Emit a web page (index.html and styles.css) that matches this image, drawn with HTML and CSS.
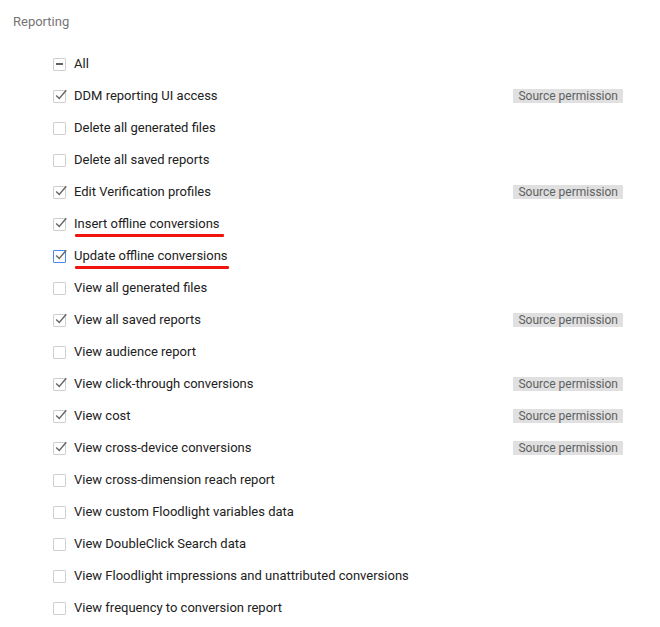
FILE: index.html
```html
<!DOCTYPE html>
<html>
<head>
<meta charset="utf-8">
<link rel="stylesheet" href="styles.css">
</head>
<body>
<div class="section">
  <div class="heading">Reporting</div>
  <ul class="perms">
    <li class="row"><span class="cb indeterminate"></span><span class="label">All</span></li>
    <li class="row"><span class="cb checked"><svg viewBox="0 0 16 16"><path d="M2.5 8.5 L6 12 L14 2.5"/></svg></span><span class="label">DDM reporting UI access</span><span class="badge">Source permission</span></li>
    <li class="row"><span class="cb"></span><span class="label">Delete all generated files</span></li>
    <li class="row"><span class="cb"></span><span class="label">Delete all saved reports</span></li>
    <li class="row"><span class="cb checked"><svg viewBox="0 0 16 16"><path d="M2.5 8.5 L6 12 L14 2.5"/></svg></span><span class="label">Edit Verification profiles</span><span class="badge">Source permission</span></li>
    <li class="row"><span class="cb checked"><svg viewBox="0 0 16 16"><path d="M2.5 8.5 L6 12 L14 2.5"/></svg></span><span class="label marked">Insert offline conversions</span></li>
    <li class="row"><span class="cb checked focus"><svg viewBox="0 0 16 16"><path d="M2.5 8.5 L6 12 L14 2.5"/></svg></span><span class="label marked short">Update offline conversions</span></li>
    <li class="row"><span class="cb"></span><span class="label">View all generated files</span></li>
    <li class="row"><span class="cb checked"><svg viewBox="0 0 16 16"><path d="M2.5 8.5 L6 12 L14 2.5"/></svg></span><span class="label">View all saved reports</span><span class="badge">Source permission</span></li>
    <li class="row"><span class="cb"></span><span class="label">View audience report</span></li>
    <li class="row"><span class="cb checked"><svg viewBox="0 0 16 16"><path d="M2.5 8.5 L6 12 L14 2.5"/></svg></span><span class="label">View click-through conversions</span><span class="badge">Source permission</span></li>
    <li class="row"><span class="cb checked"><svg viewBox="0 0 16 16"><path d="M2.5 8.5 L6 12 L14 2.5"/></svg></span><span class="label">View cost</span><span class="badge">Source permission</span></li>
    <li class="row"><span class="cb checked"><svg viewBox="0 0 16 16"><path d="M2.5 8.5 L6 12 L14 2.5"/></svg></span><span class="label">View cross-device conversions</span><span class="badge">Source permission</span></li>
    <li class="row"><span class="cb"></span><span class="label">View cross-dimension reach report</span></li>
    <li class="row"><span class="cb"></span><span class="label">View custom Floodlight variables data</span></li>
    <li class="row"><span class="cb"></span><span class="label">View DoubleClick Search data</span></li>
    <li class="row"><span class="cb"></span><span class="label">View Floodlight impressions and unattributed conversions</span></li>
    <li class="row"><span class="cb"></span><span class="label">View frequency to conversion report</span></li>
  </ul>
</div>
</body>
</html>
```
FILE: styles.css
```css
html, body {
  margin: 0;
  padding: 0;
  background: #fff;
}
body {
  font-family: Roboto, "Liberation Sans", Arial, sans-serif;
  color: #212121;
  width: 660px;
  height: 627px;
  overflow: hidden;
}
.section {
  padding: 12px 37px 0 13px;
}
.heading {
  font-size: 13px;
  line-height: 20px;
  color: #757575;
}
.perms {
  list-style: none;
  margin: 16px 0 0 40px;
  padding: 0;
}
.row {
  display: flex;
  align-items: center;
  height: 32px;
}
.cb {
  position: relative;
  box-sizing: border-box;
  width: 13px;
  height: 13px;
  border: 1px solid #cfcfcf;
  border-radius: 1px;
  flex: 0 0 auto;
  margin-right: 8px;
}
.cb.focus {
  border-color: #4a8af4;
}
.cb.indeterminate::after {
  content: "";
  position: absolute;
  left: 2px;
  right: 2px;
  top: 4px;
  height: 2px;
  background: #616161;
}
.cb svg {
  position: absolute;
  left: 0px;
  top: -3px;
  width: 14px;
  height: 14px;
  overflow: visible;
}
.cb svg path {
  fill: none;
  stroke: #666;
  stroke-width: 1.6;
}
.label {
  font-size: 13px;
  line-height: 16px;
  position: relative;
}
.label.marked::after {
  content: "";
  position: absolute;
  left: 1px;
  right: -4px;
  bottom: -5px;
  height: 3px;
  border-radius: 1px;
  background: #f0140f;
}
.label.marked.short::after {
  right: -1px;
}
.badge {
  margin-left: auto;
  background: #e0e0e0;
  color: #616161;
  font-size: 12px;
  line-height: 14px;
  padding: 0 5px;
}
```
